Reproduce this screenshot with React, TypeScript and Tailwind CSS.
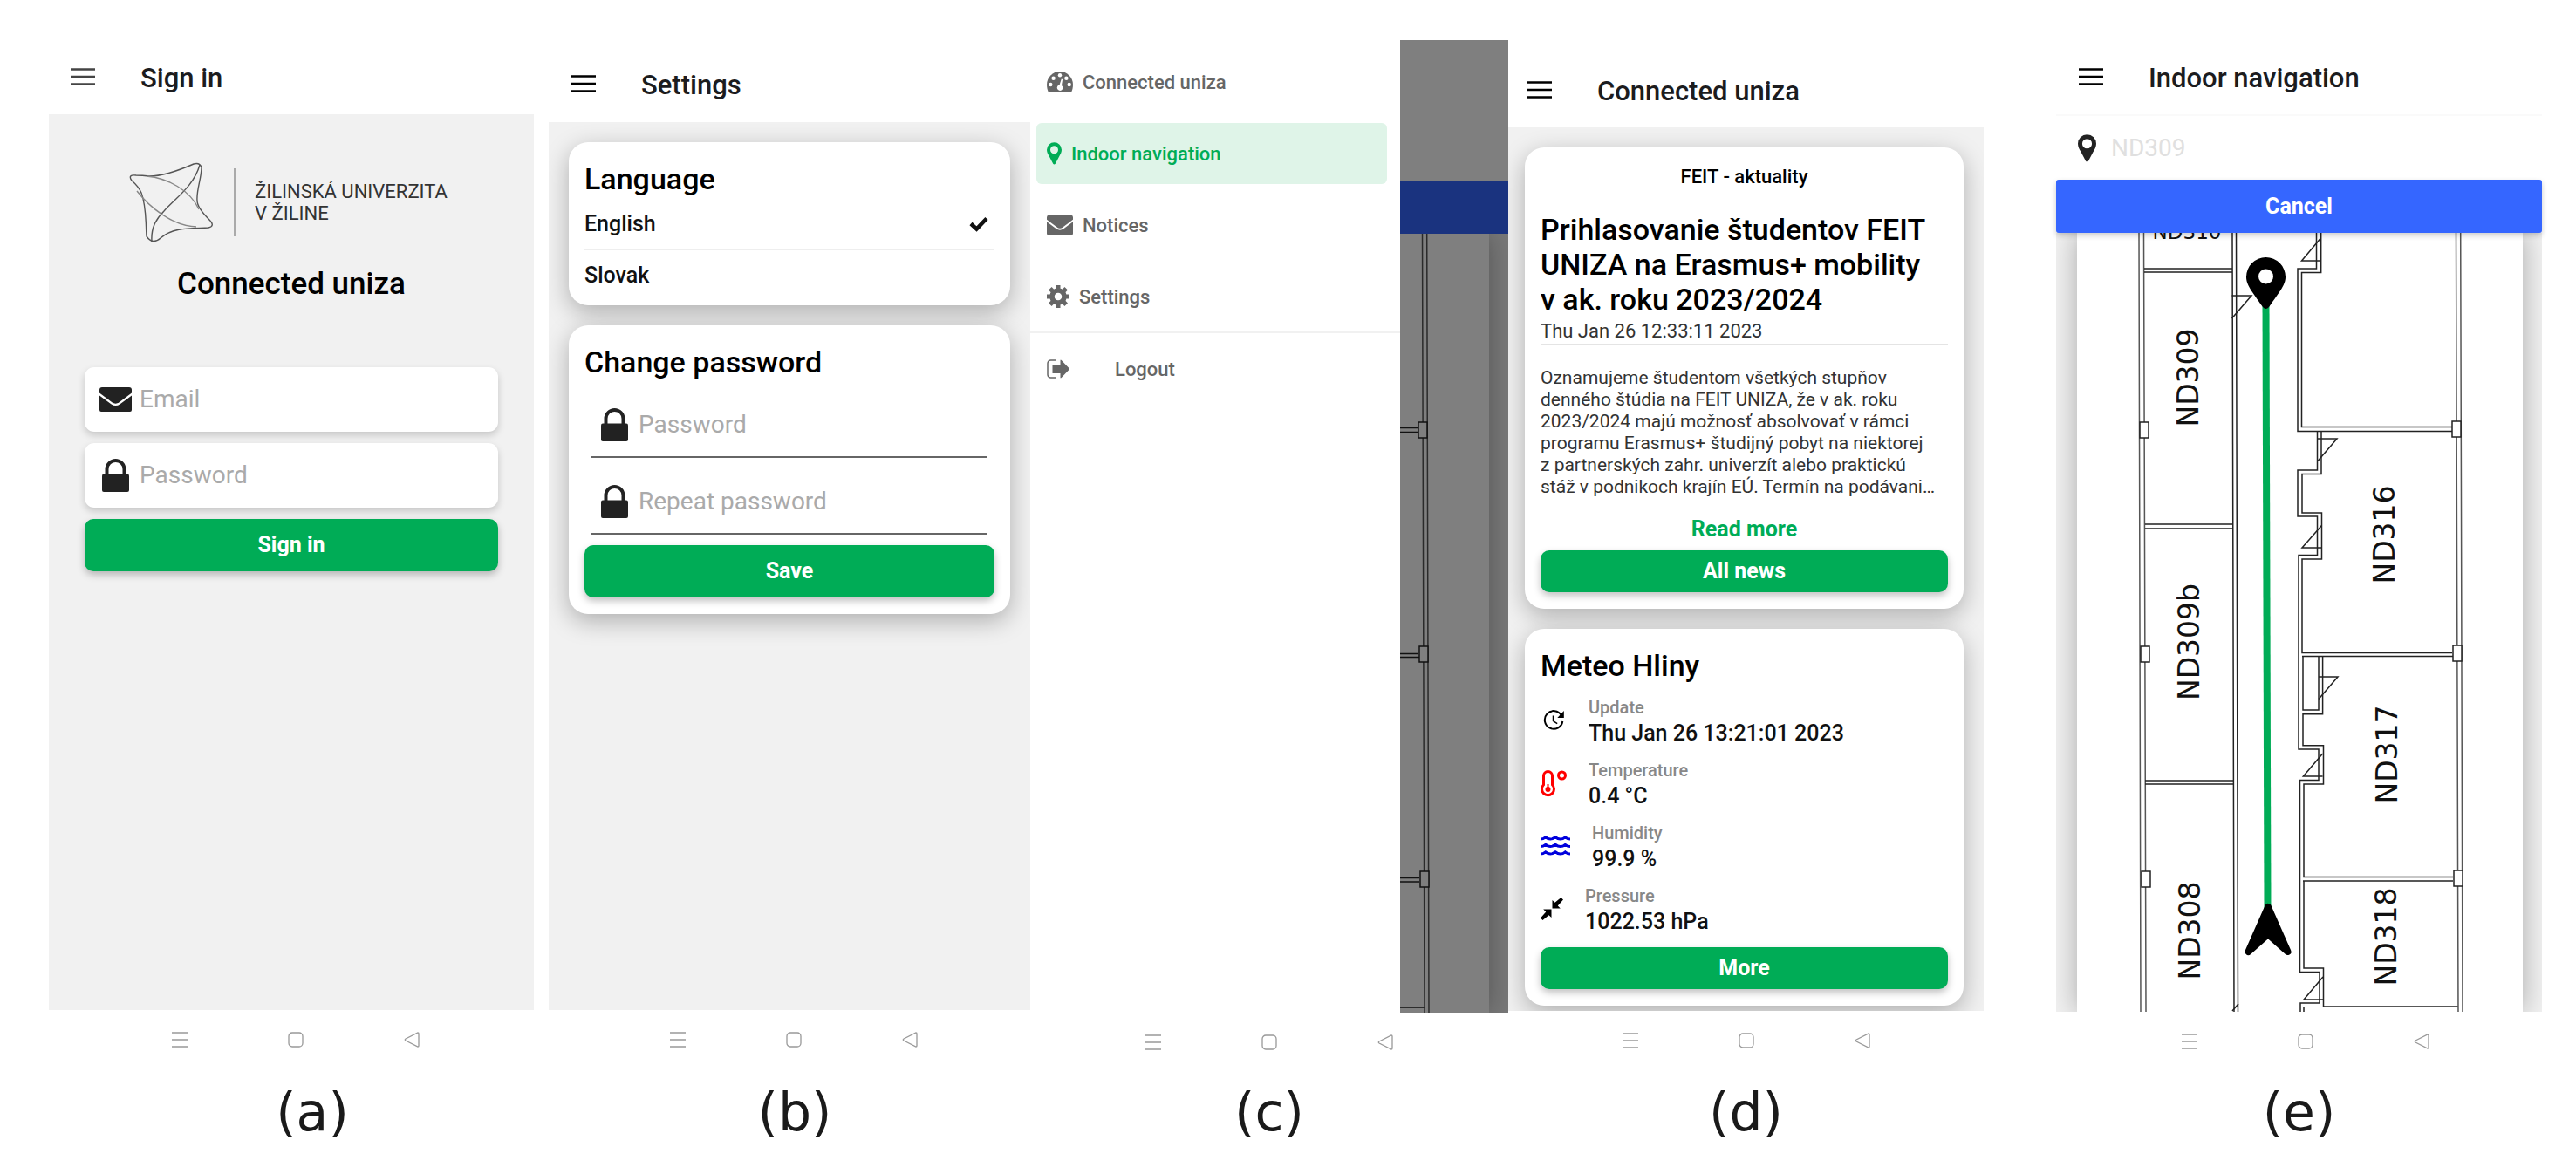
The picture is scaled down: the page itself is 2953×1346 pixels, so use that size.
import React from 'react';

const Roboto = "font-['Roboto','Liberation_Sans',sans-serif]";

/* ---------- icons ---------- */

const MenuIcon = () => (
    <svg viewBox="0 0 28 20" className="w-7 h-5" stroke="currentColor" strokeWidth="2.5" aria-hidden="true">
        <path d="M0 1.500h28M0 10h28M0 18.500h28" />
    </svg>
);

const MailIcon = ({ className }: { className: string }) => (
    <svg viewBox="0 0 37 28" className={className} fill="currentColor" aria-hidden="true">
        <path d="M3 0h31a3 3 0 0 1 3 3v3.400L22.600 17.200a7 7 0 0 1-8.200 0L0 6.400V3a3 3 0 0 1 3-3z" />
        <path d="M0 9.400l13.300 9.800a9 9 0 0 0 10.400 0L37 9.400V26a2 2 0 0 1-2 2H2a2 2 0 0 1-2-2z" />
    </svg>
);

const LockIcon = () => (
    <svg viewBox="0 0 31 38" className="w-[31px] h-[38px]" aria-hidden="true">
        <path d="M5.500 20v-8a10 10 0 0 1 20 0v8" fill="none" stroke="currentColor" strokeWidth="4" />
        <rect y="17.500" width="31" height="20.500" rx="2" fill="currentColor" />
    </svg>
);

const PinIcon = ({ className }: { className: string }) => (
    <svg viewBox="0 0 20 30" className={className} fill="currentColor" fillRule="evenodd" aria-hidden="true">
        <path d="M10 0a10 10 0 0 1 10 10c0 3.400-1.600 6-3.400 9L11.500 28.700c-.8 1.300-2.200 1.300-3 0L3.400 19C1.600 16 0 13.400 0 10A10 10 0 0 1 10 0zm0 4.700a5.300 5.300 0 1 0 0 10.600 5.300 5.300 0 0 0 0-10.600z" />
    </svg>
);

const GaugeIcon = () => (
    <svg viewBox="0 0 30 24" className="w-[30px] h-6" aria-hidden="true">
        <path d="M2 24C.8 21.500 0 18.500 0 15a15 15 0 0 1 30 0c0 3.500-.8 6.500-2 9z" fill="currentColor" />
        <g fill="#fff">
            <circle cx="4.300" cy="15" r="2.200" />
            <circle cx="7.600" cy="7.800" r="2.200" />
            <circle cx="15" cy="4.200" r="2.200" />
            <circle cx="22.400" cy="7.800" r="2.200" />
            <circle cx="25.700" cy="15" r="2.200" />
            <path d="M16.800 8.500l1.300.4-1.100 7a3.300 3.300 0 1 1-2.400-.6z" />
        </g>
    </svg>
);

const CogIcon = () => (
    <svg viewBox="0 0 26 26" className="w-[26px] h-[26px]" aria-hidden="true">
        <circle cx="13" cy="13" r="7" fill="none" stroke="currentColor" strokeWidth="5.500" />
        <path
            d="M13 0v5M13 21v5M0 13h5M21 13h5M3.800 3.800l3.600 3.600M18.600 18.600l3.600 3.600M22.200 3.800l-3.600 3.600M7.400 18.600l-3.600 3.600"
            stroke="currentColor"
            strokeWidth="5"
        />
    </svg>
);

const LogoutIcon = () => (
    <svg viewBox="0 0 26 22" className="w-[26px] h-[22px]" aria-hidden="true">
        <path d="M10.500 1H4.500A3.500 3.500 0 0 0 1 4.500v13A3.500 3.500 0 0 0 4.500 21h6" fill="none" stroke="currentColor" strokeWidth="1.500" />
        <path d="M6.500 6h9V1.500q0-1.500 1.200-.6L25.400 10q.9 1 0 2l-8.700 9.100q-1.200.9-1.200-.6V16h-9z" fill="currentColor" />
    </svg>
);

const CheckIcon = () => (
    <svg viewBox="0 0 22 18" className="w-[22px] h-[18px]" aria-hidden="true">
        <path d="M2 8.500l6.500 6L20 2.500" fill="none" stroke="currentColor" strokeWidth="4.500" />
    </svg>
);

const UpdateIcon = () => (
    <svg viewBox="0 0 30 24" className="w-[30px] h-6" fill="none" stroke="currentColor" aria-hidden="true">
        <path d="M24 6.200A10.300 10.300 0 1 0 25.300 13" strokeWidth="2" />
        <path d="M26.800 1v8h-7.500z" fill="currentColor" stroke="none" />
        <path d="M14.500 6.500v6.200l4.700 3" strokeWidth="1.500" />
    </svg>
);

const ThermometerIcon = () => (
    <svg viewBox="0 0 30 31" className="w-[30px] h-[31px]" fill="none" stroke="#f00" aria-hidden="true">
        <path d="M3.500 6.500a5 5 0 0 1 10 0v10.300a7 7 0 1 1-10 0z" strokeWidth="3" />
        <path d="M8.500 16v4" strokeWidth="2" />
        <circle cx="8.500" cy="22" r="3" fill="#f00" stroke="none" />
        <circle cx="24.500" cy="6" r="4" strokeWidth="3" />
    </svg>
);

const WavesIcon = () => (
    <svg viewBox="0 0 34 24" className="w-[34px] h-6" fill="none" stroke="#00d" strokeWidth="3" aria-hidden="true">
        <path d="M0 4q3 0 5.700-2.200Q8.500 4 11.300 4T17 1.800Q19.800 4 22.700 4t5.600-2.200Q31 4 34 4" />
        <path d="M0 12.500q3 0 5.700-2.200 2.800 2.200 5.600 2.200t5.700-2.200q2.800 2.200 5.700 2.200t5.600-2.200q2.700 2.200 5.700 2.200" />
        <path d="M0 21q3 0 5.700-2.200Q8.500 21 11.300 21t5.700-2.200q2.800 2.200 5.700 2.200t5.600-2.200Q31 21 34 21" />
    </svg>
);

const PressureIcon = () => (
    <svg viewBox="0 0 26 26" className="w-[26px] h-[26px]" fill="currentColor" aria-hidden="true">
        <path d="M13.500 3l3 2.800L23.500 0 26 2.500l-6.200 7 3 3h-9.300z" />
        <path d="M12.500 23l-3-2.800L2.500 26 0 23.500l6.200-7-3-3h9.300z" />
    </svg>
);

const UniversityMark = () => (
    <svg viewBox="0 0 96 92" className="w-24 h-[92px]" fill="none" stroke="#555" strokeWidth="1.400" aria-hidden="true">
        <path d="M23 16C40 16 58 9 74 2q7-2 9 4c0 12-6 26-5 38q0 8 14 22c5 5 4 8-1 9-20 1-40-1-55 12q-9 8-16-2c-1-16 0-34-6-50Q11 28 3 21q-5-7 5-6 7 0 15 1z" />
        <path d="M81 3C74 28 52 42 40 56 30 66 25 76 26 91" />
        <path d="M20 16c24 2 50 16 60 38" stroke="#888" />
        <path d="M9 33c14 18 40 40 68 41" stroke="#888" />
    </svg>
);

/* ---------- floor plan ---------- */

const ROOMS = [
    { name: 'ND309', x: 139, y: 166 },
    { name: 'ND309b', x: 140, y: 469 },
    { name: 'ND308', x: 141, y: 800 },
    { name: 'ND316', x: 364, y: 346 },
    { name: 'ND317', x: 367, y: 598 },
    { name: 'ND318', x: 366, y: 807 },
];

const FloorPlan = ({ labels }: { labels: boolean }) => (
    <svg viewBox="0 0 511 893" className="block w-full" fill="none" stroke="#222" strokeWidth="1.500">
        {/* left wing */}
        <path d="M71 0l2 893M76.500 0L79 893" stroke="#555" />
        <path d="M178 0l2 893M182.500 0L184.500 893" />
        <path d="M77 41h101M77 45h101M78 334h101M78 339h101M78 628h102M78 632h102" />
        <path d="M177.500 72H200l-22.500 26M178 892l7-8" />
        {/* right wing */}
        <path d="M274.500 0v41H253v186.500h177M279.700 0v45.500h-22.200v177H430" />
        <path d="M275.500 227v45H253v53h22.500v44.500H254V592h23v35.600h-21.500v220H278V883h-22v10" />
        <path d="M280 227v49.500h-22V321h22.500v53H258v107.500h172M258 485.400h173" />
        <path d="M259 485.400V547h18v-61.600M281.600 485.400v66.300H259v36h23.500V632H260v106.600h171M259 743h172M260 743v100h22.500v44H437M260 887v6" />
        <path d="M279 6.500L257.500 32H279M276 236h22l-22 25.600M280.500 335.500L258 361h22.500M277 509h22l-22 25.400M281.600 597l-22.200 26h22.200M282 853l-22 26h22" />
        <path d="M434.500 0l2.500 893M439.700 0L442 893" stroke="#555" />
        <g fill="#fff">
            <rect x="72" y="217" width="10" height="18" />
            <rect x="73" y="474" width="10" height="18" />
            <rect x="74" y="732" width="10" height="18" />
            <rect x="430" y="216" width="10" height="18" />
            <rect x="431" y="473" width="10" height="18" />
            <rect x="432" y="731" width="10" height="18" />
        </g>
        {labels && (
            <g fill="#111" stroke="none" textAnchor="middle" className="font-['DejaVu_Sans',sans-serif] text-[33px]">
                <text x="126" y="7" className="text-[23px]">ND310</text>
                {ROOMS.map((room) => (
                    <text key={room.name} transform={`translate(${room.x} ${room.y}) rotate(-90)`}>
                        {room.name}
                    </text>
                ))}
            </g>
        )}
        {/* route */}
        <path d="M216.500 80l2 696" stroke="#00ac56" strokeWidth="8" />
        <path
            d="M216.500 28a22.500 22.500 0 0 1 22.500 22.500c0 9-6 16-19 34.500q-3.500 4-7 0c-13-18.500-19-25.500-19-34.500A22.500 22.500 0 0 1 216.500 28z"
            fill="#000"
            stroke="none"
        />
        <circle cx="216.500" cy="50" r="8.500" fill="#fff" stroke="none" />
        <path d="M219 773l22.500 51L219 804l-22.500 20z" fill="#000" stroke="#000" strokeWidth="8" strokeLinejoin="round" />
    </svg>
);

const MapView = ({ labels = false }: { labels?: boolean }) => (
    <div className="bg-[#f1f1f1] pr-[22px] pl-6 overflow-hidden grow">
        <div className="bg-white shadow-[0_0_30px_rgba(0,0,0,0.3)] h-full">
            <FloorPlan labels={labels} />
        </div>
    </div>
);

/* ---------- shared parts ---------- */

const Header = ({ title, className }: { title: string; className: string }) => (
    <header className={`flex items-center shrink-0 gap-[52px] ${className}`}>
        <button type="button" aria-label="Open menu" className="mb-1">
            <MenuIcon />
        </button>
        <h2 className="font-medium text-[#1c1c1e] text-[31px] leading-9">{title}</h2>
    </header>
);

const SystemBar = ({ className = '' }: { className?: string }) => (
    <div className={`flex justify-center items-center gap-[115px] h-[68px] text-[#999] ${className}`}>
        <svg viewBox="0 0 18 18" className="w-[18px] h-[18px]" stroke="currentColor" strokeWidth="1.500" aria-hidden="true">
            <path d="M0 1h18M0 9h18M0 17h18" />
        </svg>
        <svg viewBox="0 0 18 18" className="w-[18px] h-[18px]" fill="none" stroke="currentColor" strokeWidth="1.300" aria-hidden="true">
            <rect x="1" y="1" width="16" height="16" rx="4" />
        </svg>
        <svg viewBox="0 0 18 18" className="w-[18px] h-[18px]" fill="none" stroke="currentColor" strokeWidth="1.300" aria-hidden="true">
            <path d="M16 1q1 0 1 1v14q0 1-1 1L2 10q-1.500-1 0-2z" />
        </svg>
    </div>
);

const Caption = ({ children, className = '' }: { children: React.ReactNode; className?: string }) => (
    <figcaption
        className={`mt-auto mb-[39px] font-['DejaVu_Sans',sans-serif] text-[#1a1a1a] text-[60px] text-center leading-[64px] ${className}`}
    >
        {children}
    </figcaption>
);

const GreenButton = ({ children, className }: { children: React.ReactNode; className: string }) => (
    <button
        type="button"
        className={`bg-[#00ac56] shadow-[0_4px_8px_rgba(0,0,0,0.25)] rounded-[10px] w-full font-bold text-[25px] text-white ${className}`}
    >
        {children}
    </button>
);

const Card = ({ children, className }: { children: React.ReactNode; className: string }) => (
    <section className={`bg-white shadow-[0_8px_28px_rgba(0,0,0,0.28)] px-[18px] rounded-[22px] ${className}`}>
        {children}
    </section>
);

const CardTitle = ({ children }: { children: React.ReactNode }) => (
    <h3 className="font-medium text-[34px] text-black leading-10">{children}</h3>
);

interface FieldProps {
    id: string;
    label: string;
    type: string;
    icon: React.ReactNode;
    className: string;
}

const Field = ({ id, label, type, icon, className }: FieldProps) => (
    <div className={`flex items-center gap-[9px] text-[#222] ${className}`}>
        <label htmlFor={id} aria-label={label} className="flex justify-center w-[37px] shrink-0">
            {icon}
        </label>
        <input
            id={id}
            type={type}
            placeholder={label}
            className="bg-transparent outline-none w-full min-w-0 text-[28px] placeholder:text-[#aaa]"
        />
    </div>
);

/* ---------- screens ---------- */

const SignInScreen = () => (
    <figure className="flex flex-col col-start-2">
        <Header title="Sign in" className="pt-[49px] pl-[25px] h-[131px] text-[#444]" />
        <div className="bg-[#f1f1f1] px-[41px] grow">
            <div className="flex items-center mt-[55px] ml-[51px]">
                <UniversityMark />
                <div className="bg-[#aaa] ml-6 w-[2px] h-[78px]" />
                <p className="ml-[22px] text-[#333] text-[22px] leading-[25px] whitespace-nowrap">
                    ŽILINSKÁ UNIVERZITA
                    <br />V ŽILINE
                </p>
            </div>
            <h1 className="mt-7 font-medium text-[35px] text-black text-center leading-10">Connected uniza</h1>
            <form className="flex flex-col gap-[13px] mt-[75px]">
                <Field
                    id="email"
                    label="Email"
                    type="email"
                    icon={<MailIcon className="w-[37px] h-7" />}
                    className="bg-white shadow-[0_4px_8px_rgba(0,0,0,0.18)] pl-[17px] rounded-[11px] h-[74px]"
                />
                <Field
                    id="password"
                    label="Password"
                    type="password"
                    icon={<LockIcon />}
                    className="bg-white shadow-[0_4px_8px_rgba(0,0,0,0.18)] pl-[17px] rounded-[11px] h-[74px]"
                />
                <GreenButton className="h-[60px]">Sign in</GreenButton>
            </form>
        </div>
        <footer className="flex flex-col h-[188px]">
            <SystemBar className="pl-[9px]" />
            <Caption className="pl-12">(a)</Caption>
        </footer>
    </figure>
);

const SettingsScreen = () => (
    <figure className="flex flex-col col-start-4">
        <Header title="Settings" className="pt-14 pl-[26px] h-[140px]" />
        <div className="flex flex-col gap-[23px] bg-[#f1f1f1] px-[23px] pt-[23px] overflow-hidden grow">
            <Card className="pt-[22px] pb-[5px]">
                <CardTitle>Language</CardTitle>
                <button
                    type="button"
                    aria-pressed="true"
                    className="flex justify-between items-center mt-[3px] pr-[7px] border-[#eee] border-b-2 w-full h-[59px] font-medium text-[#111] text-[25px]"
                >
                    English
                    <CheckIcon />
                </button>
                <button
                    type="button"
                    aria-pressed="false"
                    className="flex items-center w-full h-[58px] font-medium text-[#111] text-[25px]"
                >
                    Slovak
                </button>
            </Card>
            <Card className="pt-[22px] pb-[19px]">
                <CardTitle>Change password</CardTitle>
                <form>
                    <Field
                        id="new-password"
                        label="Password"
                        type="password"
                        icon={<LockIcon />}
                        className="mx-2 mt-0.5 pt-[14px] pl-2 border-[#666] border-b-2 h-[88px]"
                    />
                    <Field
                        id="repeat-password"
                        label="Repeat password"
                        type="password"
                        icon={<LockIcon />}
                        className="mx-2 pt-[14px] pl-2 border-[#666] border-b-2 h-[88px]"
                    />
                    <GreenButton className="mt-3 h-[60px]">Save</GreenButton>
                </form>
            </Card>
        </div>
        <footer className="flex flex-col h-[188px]">
            <SystemBar className="pl-[10px]" />
            <Caption className="pl-3">(b)</Caption>
        </footer>
    </figure>
);

const drawerLink = 'flex items-center gap-[11px] ml-[7px] mr-[15px] pl-3 h-[70px] rounded-md font-medium text-[22px]';

const DrawerScreen = () => (
    <figure className="flex flex-col col-start-5">
        <div className="flex grow">
            <nav className="bg-white pt-[59px] text-[#666] grow-[424] basis-0">
                <div className="flex flex-col gap-3 pb-[5px]">
                    <a href="#home" className={drawerLink}>
                        <GaugeIcon />
                        Connected uniza
                    </a>
                    <a href="#navigation" aria-current="page" className={`${drawerLink} bg-[#dff4e8] text-[#00ac56]`}>
                        <PinIcon className="w-[17px] h-[26px]" />
                        Indoor navigation
                    </a>
                    <a href="#notices" className={drawerLink}>
                        <MailIcon className="w-[30px] h-6" />
                        Notices
                    </a>
                    <a href="#settings" className={drawerLink}>
                        <CogIcon />
                        Settings
                    </a>
                </div>
                <div className="pt-[6px] border-[#f1f1f1] border-t-2">
                    <a href="#logout" className="flex items-center gap-[52px] mr-[15px] ml-[7px] pl-3 h-[70px] font-medium text-[22px]">
                        <LogoutIcon />
                        Logout
                    </a>
                </div>
            </nav>
            {/* dimmed page behind the drawer */}
            <div className="relative mt-[46px] overflow-hidden grow-[124] basis-0">
                <div className="top-0 right-0 bottom-0 absolute flex flex-col bg-white w-[557px]">
                    <div className="h-[161px] shrink-0" />
                    <div className="bg-[#3566ff] h-[61px] shrink-0" />
                    <MapView />
                </div>
                <div className="absolute inset-0 bg-black/50" />
            </div>
        </div>
        <footer className="flex flex-col h-[185px]">
            <SystemBar />
            <Caption>(c)</Caption>
        </footer>
    </figure>
);

const METEO = [
    { label: 'Update', value: 'Thu Jan 26 13:21:01 2023', icon: <UpdateIcon /> },
    { label: 'Temperature', value: '0.4 °C', icon: <ThermometerIcon /> },
    { label: 'Humidity', value: '99.9 %', icon: <WavesIcon /> },
    { label: 'Pressure', value: '1022.53 hPa', icon: <PressureIcon /> },
];

const HomeScreen = () => (
    <figure className="flex flex-col col-start-6">
        <Header title="Connected uniza" className="pt-16 pl-[22px] h-[146px]" />
        <div className="flex flex-col gap-[23px] bg-[#f1f1f1] pt-[23px] pr-[23px] pl-[19px] overflow-hidden grow">
            <Card className="pt-5 pb-[19px]">
                <p className="font-medium text-[22px] text-black text-center leading-7">FEIT - aktuality</p>
                <h3 className="mt-[26px] font-medium text-[34px] text-black leading-10 whitespace-nowrap">
                    Prihlasovanie študentov FEIT
                    <br />
                    UNIZA na Erasmus+ mobility
                    <br />v ak. roku 2023/2024
                </h3>
                <p className="mt-[3px] border-[#e4e4e4] border-b-2 text-[#333] text-[22px] leading-7">
                    Thu Jan 26 12:33:11 2023
                </p>
                <p className="mt-[25px] text-[#333] text-[21px] leading-[25px] whitespace-nowrap">
                    Oznamujeme študentom všetkých stupňov
                    <br />
                    denného štúdia na FEIT UNIZA, že v ak. roku
                    <br />
                    2023/2024 majú možnosť absolvovať v rámci
                    <br />
                    programu Erasmus+ študijný pobyt na niektorej
                    <br />
                    z partnerských zahr. univerzít alebo praktickú
                    <br />
                    stáž v podnikoch krajín EÚ. Termín na podávani…
                </p>
                <a href="#article" className="block mt-[22px] mb-[10px] font-bold text-[#00ac56] text-[25px] text-center leading-7">
                    Read more
                </a>
                <GreenButton className="h-12">All news</GreenButton>
            </Card>
            <Card className="pt-[22px] pb-[19px]">
                <CardTitle>Meteo Hliny</CardTitle>
                <dl className="flex flex-col gap-3 mt-[13px] mb-[14px]">
                    {METEO.map((item) => (
                        <div key={item.label} className="flex items-center gap-[25px]">
                            {item.icon}
                            <div className="font-medium leading-[30px]">
                                <dt className="text-[#888] text-[20px]">{item.label}</dt>
                                <dd className="text-[#111] text-[25px]">{item.value}</dd>
                            </div>
                        </div>
                    ))}
                </dl>
                <GreenButton className="h-12">More</GreenButton>
            </Card>
        </div>
        <footer className="flex flex-col h-[187px]">
            <SystemBar />
            <Caption>(d)</Caption>
        </footer>
    </figure>
);

const NavigationScreen = () => (
    <figure className="flex flex-col col-start-8">
        <Header title="Indoor navigation" className="pt-[49px] pl-[26px] h-[131px]" />
        <div className="flex items-center gap-[17px] pl-[25px] border-[#fafafa] border-t-2 h-[75px] shrink-0">
            <label htmlFor="room" aria-label="Room" className="text-[#222]">
                <PinIcon className="w-[21px] h-8" />
            </label>
            <input
                id="room"
                type="text"
                placeholder="ND309"
                className="outline-none w-full min-w-0 text-[28px] placeholder:text-[#e0e0e0]"
            />
        </div>
        <button
            type="button"
            className="z-10 bg-[#3566ff] shadow-[0_3px_6px_rgba(0,0,0,0.2)] rounded-[3px] h-[61px] font-bold text-[25px] text-white shrink-0"
        >
            Cancel
        </button>
        <MapView labels />
        <footer className="flex flex-col h-[186px]">
            <SystemBar className="pl-[14px]" />
            <Caption>(e)</Caption>
        </footer>
    </figure>
);

const App = () => {
    return (
        <main
            className={`grid grid-cols-[56fr_minmax(0,556fr)_17fr_minmax(0,552fr)_minmax(0,548fr)_minmax(0,545fr)_83fr_minmax(0,557fr)_39fr] bg-white min-h-screen text-black ${Roboto}`}
        >
            <SignInScreen />
            <SettingsScreen />
            <DrawerScreen />
            <HomeScreen />
            <NavigationScreen />
        </main>
    );
};

export default App;
